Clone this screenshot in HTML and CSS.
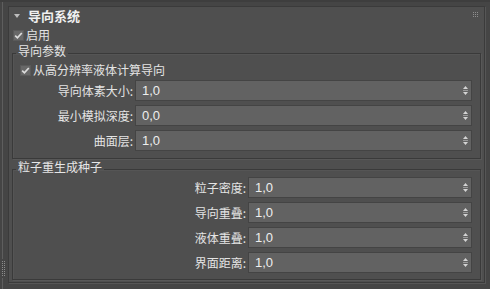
FILE: index.html
```html
<!DOCTYPE html>
<html lang="zh">
<head>
<meta charset="utf-8">
<title>导向系统</title>
<link rel="stylesheet" href="styles.css">
</head>
<body>
<div class="strip">
  <div class="strip-line"></div>
  <svg class="strip-grip" width="5" height="15" viewBox="0 0 5 15">
    <g fill="#8c8c8c">
      <rect x="1" y="0" width="1" height="1"/><rect x="3" y="0" width="1" height="1"/>
      <rect x="1" y="2" width="1" height="1"/><rect x="3" y="2" width="1" height="1"/>
      <rect x="1" y="4" width="1" height="1"/><rect x="3" y="4" width="1" height="1"/>
      <rect x="1" y="6" width="1" height="1"/><rect x="3" y="6" width="1" height="1"/>
      <rect x="1" y="8" width="1" height="1"/><rect x="3" y="8" width="1" height="1"/>
      <rect x="1" y="10" width="1" height="1"/><rect x="3" y="10" width="1" height="1"/>
      <rect x="1" y="12" width="1" height="1"/><rect x="3" y="12" width="1" height="1"/>
      <rect x="1" y="14" width="1" height="1"/><rect x="3" y="14" width="1" height="1"/>
    </g>
  </svg>
  <div class="strip-line short"></div>
</div>
<div class="panel">
  <div class="header">
    <svg class="caret" width="6" height="4" viewBox="0 0 6 4"><polygon points="0,0 6,0 3,4" fill="#bdbdbd"/></svg>
    <span class="title">导向系统</span>
    <svg class="grip" width="5" height="5" viewBox="0 0 5 5">
      <g fill="#8e8e8e">
        <rect x="0" y="0" width="1" height="1"/><rect x="2" y="0" width="1" height="1"/><rect x="4" y="0" width="1" height="1"/>
        <rect x="0" y="2" width="1" height="1"/><rect x="2" y="2" width="1" height="1"/><rect x="4" y="2" width="1" height="1"/>
        <rect x="0" y="4" width="1" height="1"/><rect x="2" y="4" width="1" height="1"/><rect x="4" y="4" width="1" height="1"/>
      </g>
    </svg>
  </div>
  <label class="check-row enable">
    <span class="cb"><svg width="9" height="9" viewBox="0 0 9 9"><polyline points="1.2,4.6 3.4,6.8 7.8,2" fill="none" stroke="#dcdcdc" stroke-width="1.7"/></svg></span>
    <span>启用</span>
  </label>

  <fieldset class="group g1">
    <legend>导向参数</legend>
    <label class="check-row inner">
      <span class="cb"><svg width="9" height="9" viewBox="0 0 9 9"><polyline points="1.2,4.6 3.4,6.8 7.8,2" fill="none" stroke="#dcdcdc" stroke-width="1.7"/></svg></span>
      <span>从高分辨率液体计算导向</span>
    </label>
    <div class="rows">
      <div class="row"><span class="lbl">导向体素大小:</span><div class="spin"><span>1,0</span><svg width="5" height="9" viewBox="0 0 5 9"><g fill="#d4d4d4"><polygon points="2.5,0 5,3 0,3"/><rect x="0" y="4" width="5" height="1" fill="#9a9a9a"/><polygon points="0,6 5,6 2.5,9"/></g></svg></div></div>
      <div class="row"><span class="lbl">最小模拟深度:</span><div class="spin"><span>0,0</span><svg width="5" height="9" viewBox="0 0 5 9"><g fill="#d4d4d4"><polygon points="2.5,0 5,3 0,3"/><rect x="0" y="4" width="5" height="1" fill="#9a9a9a"/><polygon points="0,6 5,6 2.5,9"/></g></svg></div></div>
      <div class="row"><span class="lbl">曲面层:</span><div class="spin"><span>1,0</span><svg width="5" height="9" viewBox="0 0 5 9"><g fill="#d4d4d4"><polygon points="2.5,0 5,3 0,3"/><rect x="0" y="4" width="5" height="1" fill="#9a9a9a"/><polygon points="0,6 5,6 2.5,9"/></g></svg></div></div>
    </div>
  </fieldset>

  <fieldset class="group g2">
    <legend>粒子重生成种子</legend>
    <div class="rows">
      <div class="row"><span class="lbl">粒子密度:</span><div class="spin"><span>1,0</span><svg width="5" height="9" viewBox="0 0 5 9"><g fill="#d4d4d4"><polygon points="2.5,0 5,3 0,3"/><rect x="0" y="4" width="5" height="1" fill="#9a9a9a"/><polygon points="0,6 5,6 2.5,9"/></g></svg></div></div>
      <div class="row"><span class="lbl">导向重叠:</span><div class="spin"><span>1,0</span><svg width="5" height="9" viewBox="0 0 5 9"><g fill="#d4d4d4"><polygon points="2.5,0 5,3 0,3"/><rect x="0" y="4" width="5" height="1" fill="#9a9a9a"/><polygon points="0,6 5,6 2.5,9"/></g></svg></div></div>
      <div class="row"><span class="lbl">液体重叠:</span><div class="spin"><span>1,0</span><svg width="5" height="9" viewBox="0 0 5 9"><g fill="#d4d4d4"><polygon points="2.5,0 5,3 0,3"/><rect x="0" y="4" width="5" height="1" fill="#9a9a9a"/><polygon points="0,6 5,6 2.5,9"/></g></svg></div></div>
      <div class="row"><span class="lbl">界面距离:</span><div class="spin"><span>1,0</span><svg width="5" height="9" viewBox="0 0 5 9"><g fill="#d4d4d4"><polygon points="2.5,0 5,3 0,3"/><rect x="0" y="4" width="5" height="1" fill="#9a9a9a"/><polygon points="0,6 5,6 2.5,9"/></g></svg></div></div>
    </div>
  </fieldset>
</div>
</body>
</html>
```
FILE: styles.css
```css
* { box-sizing: border-box; }
html, body { margin: 0; padding: 0; }
body {
  width: 490px;
  height: 289px;
  overflow: hidden;
  background: #454545;
  display: flex;
  font-family: "Noto Sans CJK SC", "Noto Sans", sans-serif;
  font-size: 12px;
  color: #e4e4e4;
  border-top: 2px solid #3e3e3e;
}
.strip {
  width: 8px;
  flex: none;
  display: flex;
  flex-direction: column;
  align-items: flex-start;
  padding-left: 1px;
}
.strip-line {
  flex: 1;
  width: 1px;
  margin-left: 1px;
  background: #5e5e5e;
}
.strip-line.short { flex: 0 0 11px; }
.strip-grip { display: block; margin: 2px 0; }

.panel {
  flex: 1;
  margin: 4px 5px 6px 0;
  background: #4f4f4f;
  border: 1px solid #3b3b3b;
  box-shadow: 1px 1px 0 #565656;
  display: flex;
  flex-direction: column;
}
.header {
  height: 18px;
  display: flex;
  align-items: center;
  padding-left: 5px;
  padding-right: 6px;
}
.caret { display: block; flex: none; margin-top: -1px; }
.title {
  margin-left: 8px;
  font-weight: bold;
  font-size: 13px;
  line-height: 16px;
  color: #f0f0f0;
  flex: 1;
}
.grip { display: block; flex: none; margin-top: -3px; }

.check-row {
  display: flex;
  align-items: center;
  gap: 2px;
  line-height: 14px;
}
.enable { height: 20px; padding-left: 4px; }
.cb {
  width: 11px;
  height: 11px;
  flex: none;
  background: #686868;
  border: 1px solid #5a5a5a;
  display: flex;
  align-items: center;
  justify-content: center;
}
.cb svg { display: block; }

.group {
  margin: 0 3px;
  padding: 0 8px 7px 0;
  border: 1px solid #3a3a3a;
  box-shadow: 1px 1px 0 #585858, inset 1px 1px 0 #555555;
  min-width: 0;
}
.group legend {
  margin-left: 3px;
  padding: 0 2px 4px;
  line-height: 12px;
  font-size: 12px;
  color: #e6e6e6;
}
.g2 { margin-top: 2px; padding-bottom: 6px; }

.inner { height: 18px; padding-left: 7px; margin-bottom: 1px; }

.rows {
  display: flex;
  flex-direction: column;
  gap: 4px;
}
.row {
  display: grid;
  grid-template-columns: 120px 1fr;
  column-gap: 2px;
  align-items: center;
}
.g2 .row { grid-template-columns: 233px 1fr; }
.lbl {
  text-align: right;
  line-height: 14px;
  white-space: nowrap;
}
.spin {
  height: 21px;
  background: #626262;
  border: 1px solid #444444;
  display: flex;
  align-items: center;
  justify-content: space-between;
  padding: 0 3px 0 6px;
  font-family: "Liberation Sans", sans-serif;
  font-size: 13px;
  color: #eeeeee;
}
.spin svg { display: block; }
```
